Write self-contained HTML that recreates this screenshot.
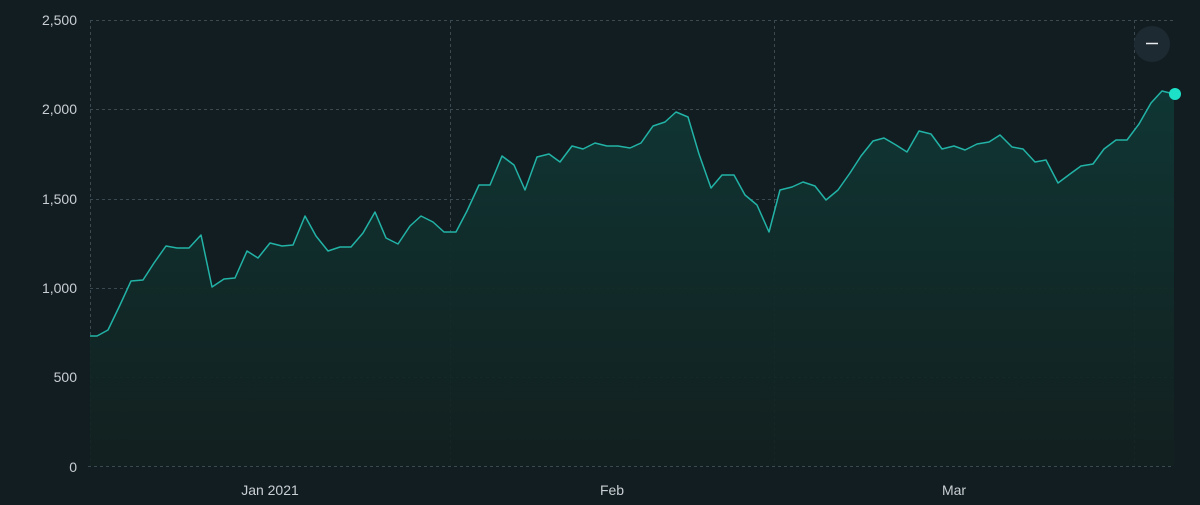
<!DOCTYPE html><html><head><style>body{margin:0;background:#121d22;}svg{display:block}text{font-family:"Liberation Sans",sans-serif;font-size:14px;fill:#c9cfd2}</style></head><body>
<svg width="1200" height="505" viewBox="0 0 1200 505">
<defs><linearGradient id="g" x1="0" y1="0" x2="0" y2="1"><stop offset="0" stop-color="#0f3634"/><stop offset="1" stop-color="#12201f" stop-opacity="0.9"/></linearGradient></defs>
<g stroke="#3a4a50" stroke-dasharray="3,3" stroke-width="1">
<line x1="90" y1="20.5" x2="1174" y2="20.5"/><line x1="90" y1="109.5" x2="1174" y2="109.5"/><line x1="90" y1="199.5" x2="1174" y2="199.5"/><line x1="90" y1="288.5" x2="1174" y2="288.5"/><line x1="90" y1="377.5" x2="1174" y2="377.5"/><line x1="88" y1="466.5" x2="1174" y2="466.5"/>
<line x1="90.5" y1="20" x2="90.5" y2="466"/><line x1="450.5" y1="20" x2="450.5" y2="466"/><line x1="774.5" y1="20" x2="774.5" y2="466"/><line x1="1134.5" y1="20" x2="1134.5" y2="466"/>
</g>
<path id="p" d="M90,336 L97,336 108,330 120,305 131,281 143,280 154,263 166,246 177,248 189,248 201,235 212,287 224,279 235,278 247,251 258,258 270,243 282,246 293,245 305,216 316,236 328,251 340,247 351,247 363,233 375,212 386,238 398,244 410,226 421,216 433,222 444,232 456,232 467,211 479,185 490,185 502,156 514,165 525,190 537,157 549,154 560,162 572,146 583,149 595,143 607,146 618,146 630,148 641,143 653,126 665,122 676,112 688,117 699,154 711,188 722,175 734,175 745,195 757,205 769,232 780,190 792,187 803,182 815,186 826,200 838,190 850,173 861,156 873,141 884,138 896,145 907,152 919,131 931,134 942,149 954,146 965,150 977,144 989,142 1000,135 1012,147 1023,149 1035,162 1046,160 1058,183 1070,174 1081,166 1093,164 1104,149 1116,140 1127,140 1139,124 1151,103 1162,91 1174,94 L1174,466 L90,466 Z" fill="url(#g)"/>
<polyline fill="none" stroke="#22b3a6" stroke-width="1.5" stroke-linejoin="round" points="90,336 97,336 108,330 120,305 131,281 143,280 154,263 166,246 177,248 189,248 201,235 212,287 224,279 235,278 247,251 258,258 270,243 282,246 293,245 305,216 316,236 328,251 340,247 351,247 363,233 375,212 386,238 398,244 410,226 421,216 433,222 444,232 456,232 467,211 479,185 490,185 502,156 514,165 525,190 537,157 549,154 560,162 572,146 583,149 595,143 607,146 618,146 630,148 641,143 653,126 665,122 676,112 688,117 699,154 711,188 722,175 734,175 745,195 757,205 769,232 780,190 792,187 803,182 815,186 826,200 838,190 850,173 861,156 873,141 884,138 896,145 907,152 919,131 931,134 942,149 954,146 965,150 977,144 989,142 1000,135 1012,147 1023,149 1035,162 1046,160 1058,183 1070,174 1081,166 1093,164 1104,149 1116,140 1127,140 1139,124 1151,103 1162,91 1174,94"/>
<circle cx="1175" cy="94" r="6" fill="#1de0c8"/>
<circle cx="1152" cy="44" r="18" fill="#1e2a31"/>
<line x1="1146" y1="43.5" x2="1158" y2="43.5" stroke="#e8ecee" stroke-width="1.5"/>
<g text-anchor="end"><text x="77" y="25">2,500</text><text x="77" y="114">2,000</text><text x="77" y="204">1,500</text><text x="77" y="293">1,000</text><text x="77" y="382">500</text><text x="77" y="472">0</text></g>
<g text-anchor="middle"><text x="270" y="495">Jan 2021</text><text x="612" y="495">Feb</text><text x="954" y="495">Mar</text></g>
</svg></body></html>
